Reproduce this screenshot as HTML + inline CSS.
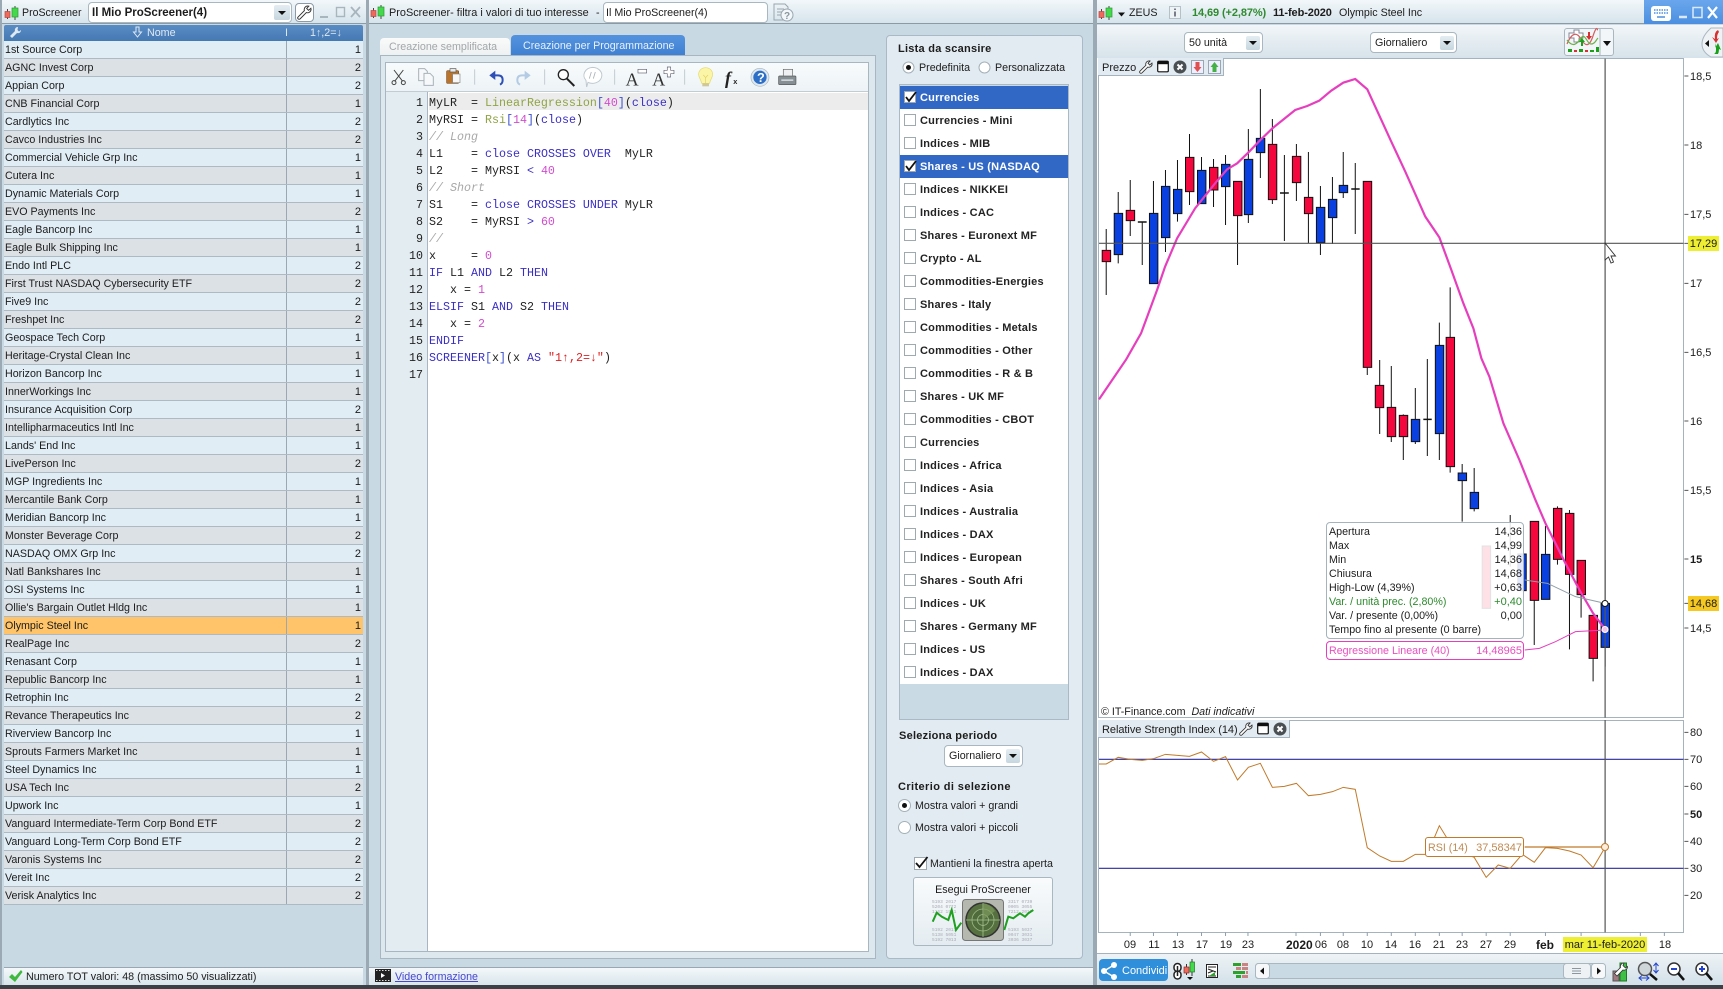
<!DOCTYPE html>
<html lang="it"><head><meta charset="utf-8"><title>ProScreener</title>
<style>
html,body{margin:0;padding:0;width:1723px;height:989px;overflow:hidden;background:#c8d9e3;font-family:"Liberation Sans",sans-serif;font-size:10.7px;color:#1c1c1c}
.b{position:absolute;box-sizing:border-box}
.t{position:absolute;white-space:nowrap;line-height:14px;height:14px;margin-top:1px}
.r{text-align:right}
.bd{font-weight:bold;font-size:11px}
.f11{font-size:11px}
.tb{background:linear-gradient(#f2f7fa,#d6e4ec);border-bottom:1px solid #8b9aa5}
.row{position:absolute;left:4px;width:359px;height:18px;box-sizing:border-box;border-bottom:1px solid #aebac3;line-height:19px;padding-left:1px;white-space:nowrap}
.row i{position:absolute;left:282px;top:0;bottom:0;border-left:1px solid #9aa8b2}
.row b{position:absolute;right:2px;top:0;font-weight:normal;font-size:11px}
.o{background:#e0edf5}.e{background:#dce1e6}
.sel{background:#ffc469}
.it{position:absolute;left:900px;width:168px;height:23px;line-height:24px;padding-left:20px;box-sizing:border-box;font-weight:bold;font-size:11px;color:#222;background:#fff;white-space:nowrap;letter-spacing:.2px}
.it u{position:absolute;left:4px;top:5px;width:12px;height:12px;background:#fff;border:1px solid #9fa9b0;box-sizing:border-box;text-decoration:none}
.it.s{background:#3168c6;color:#fff}
.combo{position:absolute;background:#fff;border:1px solid #a9b7c0;border-radius:4px;box-sizing:border-box;line-height:21px;padding-left:4px;white-space:nowrap}
.combo s{position:absolute;right:2px;top:3px;width:14px;height:14px;background:linear-gradient(#e4edf2,#c6d6df);border-radius:2px;text-decoration:none}
.combo s:after{content:"";position:absolute;left:3px;top:5px;border:4px solid transparent;border-top:4px solid #111;border-bottom:0}
pre{margin:0;position:absolute;font-family:"Liberation Mono",monospace;font-size:11.67px;line-height:17px;color:#222}
.k{color:#3a2fc4}.g{color:#8fa445}.n{color:#d24bd0}.c{color:#a8a8a8;font-style:italic}.q{color:#df2020}.h{color:#3a4fcf}
svg{position:absolute;left:0;top:0}
.v *{vector-effect:non-scaling-stroke}
.ax{font-size:11px}
.d{width:20px;text-align:center;top:937px;font-size:11px}
</style></head><body>

<!-- panels base -->
<div class="b tb" style="left:0;top:0;width:366px;height:24px"></div>
<div class="b tb" style="left:369px;top:0;width:725px;height:24px"></div>
<div class="b tb" style="left:1097px;top:0;width:626px;height:24px"></div>
<div class="b" style="left:1644px;top:0;width:79px;height:24px;background:linear-gradient(#6aa6ec,#4c8fe0)"></div>
<div class="b" style="left:0;top:0;width:2px;height:989px;background:#9aa9b3"></div>
<div class="b" style="left:366px;top:0;width:3px;height:989px;background:#9aa9b3"></div>
<div class="b" style="left:1093px;top:0;width:4px;height:989px;background:#9aa9b3"></div>

<!-- left panel -->
<div class="b" style="left:88px;top:2px;width:204px;height:21px;background:#fff;border:1px solid #a9b7c0;border-radius:4px"></div>
<div class="t bd" style="left:92px;top:5px;font-size:11.5px">Il Mio ProScreener(4)</div>
<div class="b" style="left:274px;top:5px;width:16px;height:15px;background:linear-gradient(#e4edf2,#c6d6df);border-radius:2px"></div>
<div class="b" style="left:295px;top:3px;width:19px;height:19px;background:#fff;border:1px solid #8b9aa5;border-radius:4px"></div>
<div class="t" style="left:22px;top:5px;font-size:10.6px">ProScreener</div>
<div class="b" style="left:4px;top:25px;width:359px;height:16px;background:linear-gradient(#5a8cc4,#4579b3);border-radius:2px 2px 0 0"></div>
<div class="t" style="left:147px;top:25px;color:#dfe9f3">Nome</div>
<div class="t" style="left:285px;top:25px;color:#dfe9f3">I</div>
<div class="t" style="left:310px;top:25px;color:#dfe9f3">1↑,2=↓</div>

<div class="row o" style="top:41px">1st Source Corp<i></i><b>1</b></div>
<div class="row e" style="top:59px">AGNC Invest Corp<i></i><b>2</b></div>
<div class="row o" style="top:77px">Appian Corp<i></i><b>2</b></div>
<div class="row e" style="top:95px">CNB Financial Corp<i></i><b>1</b></div>
<div class="row o" style="top:113px">Cardlytics Inc<i></i><b>2</b></div>
<div class="row e" style="top:131px">Cavco Industries Inc<i></i><b>2</b></div>
<div class="row o" style="top:149px">Commercial Vehicle Grp Inc<i></i><b>1</b></div>
<div class="row e" style="top:167px">Cutera Inc<i></i><b>1</b></div>
<div class="row o" style="top:185px">Dynamic Materials Corp<i></i><b>1</b></div>
<div class="row e" style="top:203px">EVO Payments Inc<i></i><b>2</b></div>
<div class="row o" style="top:221px">Eagle Bancorp Inc<i></i><b>1</b></div>
<div class="row e" style="top:239px">Eagle Bulk Shipping Inc<i></i><b>1</b></div>
<div class="row o" style="top:257px">Endo Intl PLC<i></i><b>2</b></div>
<div class="row e" style="top:275px">First Trust NASDAQ Cybersecurity ETF<i></i><b>2</b></div>
<div class="row o" style="top:293px">Five9 Inc<i></i><b>2</b></div>
<div class="row e" style="top:311px">Freshpet Inc<i></i><b>2</b></div>
<div class="row o" style="top:329px">Geospace Tech Corp<i></i><b>1</b></div>
<div class="row e" style="top:347px">Heritage-Crystal Clean Inc<i></i><b>1</b></div>
<div class="row o" style="top:365px">Horizon Bancorp Inc<i></i><b>1</b></div>
<div class="row e" style="top:383px">InnerWorkings Inc<i></i><b>1</b></div>
<div class="row o" style="top:401px">Insurance Acquisition Corp<i></i><b>2</b></div>
<div class="row e" style="top:419px">Intellipharmaceutics Intl Inc<i></i><b>1</b></div>
<div class="row o" style="top:437px">Lands' End Inc<i></i><b>1</b></div>
<div class="row e" style="top:455px">LivePerson Inc<i></i><b>2</b></div>
<div class="row o" style="top:473px">MGP Ingredients Inc<i></i><b>1</b></div>
<div class="row e" style="top:491px">Mercantile Bank Corp<i></i><b>1</b></div>
<div class="row o" style="top:509px">Meridian Bancorp Inc<i></i><b>1</b></div>
<div class="row e" style="top:527px">Monster Beverage Corp<i></i><b>2</b></div>
<div class="row o" style="top:545px">NASDAQ OMX Grp Inc<i></i><b>2</b></div>
<div class="row e" style="top:563px">Natl Bankshares Inc<i></i><b>1</b></div>
<div class="row o" style="top:581px">OSI Systems Inc<i></i><b>1</b></div>
<div class="row e" style="top:599px">Ollie's Bargain Outlet Hldg Inc<i></i><b>1</b></div>
<div class="row sel" style="top:617px">Olympic Steel Inc<i></i><b>1</b></div>
<div class="row e" style="top:635px">RealPage Inc<i></i><b>2</b></div>
<div class="row o" style="top:653px">Renasant Corp<i></i><b>1</b></div>
<div class="row e" style="top:671px">Republic Bancorp Inc<i></i><b>1</b></div>
<div class="row o" style="top:689px">Retrophin Inc<i></i><b>2</b></div>
<div class="row e" style="top:707px">Revance Therapeutics Inc<i></i><b>2</b></div>
<div class="row o" style="top:725px">Riverview Bancorp Inc<i></i><b>1</b></div>
<div class="row e" style="top:743px">Sprouts Farmers Market Inc<i></i><b>1</b></div>
<div class="row o" style="top:761px">Steel Dynamics Inc<i></i><b>1</b></div>
<div class="row e" style="top:779px">USA Tech Inc<i></i><b>2</b></div>
<div class="row o" style="top:797px">Upwork Inc<i></i><b>1</b></div>
<div class="row e" style="top:815px">Vanguard Intermediate-Term Corp Bond ETF<i></i><b>2</b></div>
<div class="row o" style="top:833px">Vanguard Long-Term Corp Bond ETF<i></i><b>2</b></div>
<div class="row e" style="top:851px">Varonis Systems Inc<i></i><b>2</b></div>
<div class="row o" style="top:869px">Vereit Inc<i></i><b>2</b></div>
<div class="row e" style="top:887px">Verisk Analytics Inc<i></i><b>2</b></div>

<div class="b" style="left:4px;top:967px;width:359px;height:18px;background:linear-gradient(#f4f8fa,#d8e5ec);border-top:1px solid #98a7b1"></div>
<div class="t" style="left:26px;top:969px">Numero TOT valori: 48 (massimo 50 visualizzati)</div>

<!-- middle panel -->
<div class="t" style="left:389px;top:5px;font-size:10.9px">ProScreener- filtra i valori di tuo interesse</div>
<div class="t" style="left:596px;top:5px">-</div>
<div class="b" style="left:603px;top:2px;width:165px;height:21px;background:#fff;border:1px solid #a9b7c0;border-radius:4px"></div>
<div class="t" style="left:606px;top:5px">Il Mio ProScreener(4)</div>

<div class="b" style="left:380px;top:38px;width:130px;height:17px;background:linear-gradient(#fafafa,#eef1f2);border-radius:4px 4px 0 0"></div>
<div class="t" style="left:389px;top:39px;color:#a3a7aa">Creazione semplificata</div>
<div class="b" style="left:511px;top:35px;width:174px;height:20px;background:linear-gradient(#5493de,#3f80d2);border-radius:4px 4px 0 0"></div>
<div class="t" style="left:523px;top:38px;color:#e8f1fb">Creazione per Programmazione</div>

<div class="b" style="left:380px;top:55px;width:496px;height:904px;background:#dde8ee;border:1px solid #a7b6c0"></div>
<div class="b" style="left:385px;top:62px;width:484px;height:890px;background:#fff;border:1px solid #a7b6c0"></div>
<div class="b" style="left:386px;top:63px;width:482px;height:29px;background:linear-gradient(#f8fbfc,#edf3f6);border-bottom:1px solid #c1ccd3"></div>
<div class="b" style="left:386px;top:92px;width:42px;height:859px;background:#e3ecf1;border-right:1px solid #a7b6c0"></div>
<div class="b" style="left:429px;top:93px;width:439px;height:17px;background:#ececec"></div>

<pre class="r" style="left:386px;top:95px;width:37px">1
2
3
4
5
6
7
8
9
10
11
12
13
14
15
16
17</pre>
<pre style="left:429px;top:95px">MyLR  = <span class="g">LinearRegression</span><span class="h">[</span><span class="n">40</span><span class="h">]</span>(<span class="k">close</span>)
MyRSI = <span class="g">Rsi</span><span class="h">[</span><span class="n">14</span><span class="h">]</span>(<span class="k">close</span>)
<span class="c">// Long</span>
L1    = <span class="k">close</span> <span class="k">CROSSES OVER</span>  MyLR
L2    = MyRSI <span class="k">&lt;</span> <span class="n">40</span>
<span class="c">// Short</span>
S1    = <span class="k">close</span> <span class="k">CROSSES UNDER</span> MyLR
S2    = MyRSI <span class="k">&gt;</span> <span class="n">60</span>
<span class="c">//</span>
x     = <span class="n">0</span>
<span class="k">IF</span> L1 <span class="k">AND</span> L2 <span class="k">THEN</span>
   x = <span class="n">1</span>
<span class="k">ELSIF</span> S1 <span class="k">AND</span> S2 <span class="k">THEN</span>
   x = <span class="n">2</span>
<span class="k">ENDIF</span>
<span class="k">SCREENER</span><span class="h">[</span>x<span class="h">]</span>(x <span class="k">AS</span> <span class="q">"1↑,2=↓"</span>)
</pre>

<div class="b" style="left:369px;top:967px;width:724px;height:18px;background:linear-gradient(#f4f8fa,#d8e5ec);border-top:1px solid #98a7b1"></div>
<div class="t" style="left:395px;top:969px;color:#4646d2;text-decoration:underline">Video formazione</div>

<!-- options panel -->
<div class="b" style="left:886px;top:35px;width:197px;height:924px;background:#e2ebf1;border:1px solid #a9bac6;border-radius:4px"></div>
<div class="t bd" style="left:898px;top:41px;letter-spacing:.25px">Lista da scansire</div>
<div class="t" style="left:919px;top:60px">Predefinita</div>
<div class="t" style="left:995px;top:60px">Personalizzata</div>
<div class="b" style="left:899px;top:84px;width:170px;height:636px;background:#c9dae4;border:1px solid #a9bac6"></div>
<div class="it s" style="top:86px"><u></u>Currencies</div>
<div class="it" style="top:109px"><u></u>Currencies - Mini</div>
<div class="it" style="top:132px"><u></u>Indices - MIB</div>
<div class="it s" style="top:155px"><u></u>Shares - US (NASDAQ</div>
<div class="it" style="top:178px"><u></u>Indices - NIKKEI</div>
<div class="it" style="top:201px"><u></u>Indices - CAC</div>
<div class="it" style="top:224px"><u></u>Shares - Euronext MF</div>
<div class="it" style="top:247px"><u></u>Crypto - AL</div>
<div class="it" style="top:270px"><u></u>Commodities-Energies</div>
<div class="it" style="top:293px"><u></u>Shares - Italy</div>
<div class="it" style="top:316px"><u></u>Commodities - Metals</div>
<div class="it" style="top:339px"><u></u>Commodities - Other</div>
<div class="it" style="top:362px"><u></u>Commodities - R &amp; B</div>
<div class="it" style="top:385px"><u></u>Shares - UK MF</div>
<div class="it" style="top:408px"><u></u>Commodities - CBOT</div>
<div class="it" style="top:431px"><u></u>Currencies</div>
<div class="it" style="top:454px"><u></u>Indices - Africa</div>
<div class="it" style="top:477px"><u></u>Indices - Asia</div>
<div class="it" style="top:500px"><u></u>Indices - Australia</div>
<div class="it" style="top:523px"><u></u>Indices - DAX</div>
<div class="it" style="top:546px"><u></u>Indices - European</div>
<div class="it" style="top:569px"><u></u>Shares - South Afri</div>
<div class="it" style="top:592px"><u></u>Indices - UK</div>
<div class="it" style="top:615px"><u></u>Shares - Germany MF</div>
<div class="it" style="top:638px"><u></u>Indices - US</div>
<div class="it" style="top:661px"><u></u>Indices - DAX</div>

<div class="t bd" style="left:899px;top:728px;letter-spacing:.25px">Seleziona periodo</div>
<div class="combo" style="left:944px;top:745px;width:79px;height:22px">Giornaliero<s></s></div>
<div class="t bd" style="left:898px;top:779px;letter-spacing:.4px">Criterio di selezione</div>
<div class="t" style="left:915px;top:798px">Mostra valori + grandi</div>
<div class="t" style="left:915px;top:820px">Mostra valori + piccoli</div>
<div class="t" style="left:930px;top:856px">Mantieni la finestra aperta</div>
<div class="b" style="left:913px;top:877px;width:140px;height:69px;background:linear-gradient(#f9fbfc,#e4ecf1);border:1px solid #a9b7c0;border-radius:3px"></div>
<div class="t" style="left:913px;top:882px;width:140px;text-align:center">Esegui ProScreener</div>

<!-- chart panel -->
<div class="b" style="left:1097px;top:25px;width:626px;height:33px;background:linear-gradient(#f2f6f9,#d7e3ea)"></div>
<div class="b" style="left:1097px;top:58px;width:626px;height:895px;background:#fff"></div>
<div class="b" style="left:1098px;top:58px;width:586px;height:660px;border:1px solid #a4b3bd"></div>
<div class="b" style="left:1098px;top:720px;width:586px;height:213px;border:1px solid #a4b3bd"></div>
<div class="b" style="left:1097px;top:953px;width:626px;height:33px;background:linear-gradient(#eef3f6,#d2e0e8);border-top:1px solid #a4b3bd"></div>
<div class="b" style="left:0;top:985px;width:1723px;height:4px;background:#3a4046"></div>

<div class="t" style="left:1129px;top:5px">ZEUS</div>
<div class="t bd" style="left:1192px;top:5px;color:#2f8a2f;letter-spacing:-.1px">14,69 (+2,87%)</div>
<div class="t bd" style="left:1273px;top:5px;letter-spacing:-.1px">11-feb-2020</div>
<div class="t" style="left:1339px;top:5px">Olympic Steel Inc</div>
<div class="combo" style="left:1184px;top:32px;width:79px;height:21px">50 unità<s></s></div>
<div class="combo" style="left:1370px;top:32px;width:87px;height:21px">Giornaliero<s></s></div>
<div class="b" style="left:1564px;top:28px;width:50px;height:28px;background:#f2f6f8;border:1px solid #a9b7c0;border-radius:3px"></div>
<div class="b" style="left:1098px;top:58px;width:126px;height:18px;background:#e2ebf1;border:1px solid #a4b3bd;border-width:0 1px 1px 0"></div>
<div class="t f11" style="left:1102px;top:60px">Prezzo</div>
<div class="b" style="left:1098px;top:720px;width:192px;height:18px;background:#e2ebf1;border:1px solid #a4b3bd;border-width:0 1px 1px 0"></div>
<div class="t f11" style="left:1102px;top:722px;letter-spacing:-.05px">Relative Strength Index (14)</div>

<!-- master SVG -->
<svg width="1723" height="989" viewBox="0 0 1723 989">
<defs>
<symbol id="logo" viewBox="0 0 16 14"><path d="M3.5 3V13M11 0V14" stroke="#444" stroke-width="1" fill="none"/><rect x="1" y="5.5" width="5" height="6" fill="#ef6a5a" stroke="#b04a4a" stroke-width=".7"/><rect x="8" y="2" width="6" height="9" fill="#45d84c" stroke="#2a9a30" stroke-width=".7"/></symbol>
<symbol id="wr" viewBox="0 0 16 16"><path d="M11.5 1a3.8 3.8 0 0 0-3.6 5L1.2 12.7a1.4 1.4 0 0 0 2.1 2.1L10 8.100a3.800 3.800 0 0 0 5-3.600l-.2-1-2.500 2.200-2-2L12.600 1.200z" fill="#fff" stroke="#333" stroke-width="1"/></symbol>
<symbol id="win" viewBox="0 0 12 12"><rect x=".7" y=".7" width="10.600" height="10.600" rx="1" fill="#fff" stroke="#111" stroke-width="1.200"/><rect x=".7" y=".7" width="10.600" height="3" fill="#111"/></symbol>
<symbol id="xc" viewBox="0 0 14 14"><circle cx="7" cy="7" r="6.500" fill="#4a4f54"/><path d="M4.500 4.500l5 5M9.500 4.500l-5 5" stroke="#fff" stroke-width="2"/></symbol>
</defs>

<use href="#logo" x="4" y="6" width="16" height="14"/>
<use href="#logo" x="370" y="5" width="16" height="14"/>
<use href="#logo" x="1098" y="6" width="16" height="14"/>
<use href="#wr" x="297" y="5" width="15" height="15"/>
<path d="M278 11h8l-4 4z" fill="#111"/>
<!-- left window buttons -->
<path d="M320 17h8" stroke="#a8b5bd" stroke-width="2"/><rect x="336.500" y="7.500" width="8" height="9" fill="none" stroke="#a8b5bd" stroke-width="1.400"/><path d="M351 7l9 10M360 7l-9 10" stroke="#a8b5bd" stroke-width="1.800"/>
<!-- header wrench & arrow -->
<path d="M18 27a3 3 0 0 0-3 4l-5 5 2 2 5-5a3 3 0 0 0 4-3l-2 1.500-1.500-1.500z" fill="#dfe9f3"/>
<path d="M136 27h3v5h2.500l-4 5-4-5H136z" fill="none" stroke="#dfe9f3" stroke-width="1"/>
<!-- status check -->
<path d="M9 977l3-3 3 3 6-7 1.500 2-7.500 10z" fill="#3fb83f"/>
<!-- mid title help -->
<g fill="none" stroke="#9aa6ad" stroke-width="1"><path d="M774 4h11l3 3v13h-14zM777 9h7M777 12h5M777 15h5"/></g><circle cx="787" cy="15" r="6" fill="#f2f7fa" stroke="#9aa6ad"/><text x="784" y="19" font-family="Liberation Sans" font-size="10" font-weight="bold" fill="#8a969d">?</text>
<!-- film icon -->
<rect x="375" y="969" width="16" height="13" fill="#222"/><path d="M376 970.500h14M376 980.500h14" stroke="#ddd" stroke-width="1" stroke-dasharray="1.500 1.500"/><path d="M381 973v5l4-2.500z" fill="#fff"/>

<!-- editor toolbar icons -->
<g transform="translate(370,0) scale(.3333)">
 <g fill="none" stroke="#444" stroke-width="3"><path d="M72 210l26 34M100 210l-26 34"/><circle cx="72" cy="248" r="6"/><circle cx="100" cy="248" r="6"/></g>
 <g fill="#f6f8fa" stroke="#a8b2b8" stroke-width="3"><path d="M146 206h18l8 8v28h-26z"/><path d="M162 220h18l10 10v26h-28z"/></g>
 <rect x="230" y="212" width="36" height="38" rx="3" fill="#b9732a" stroke="#7a4a1a" stroke-width="2"/><rect x="240" y="206" width="18" height="10" fill="#e8e8e8" stroke="#555" stroke-width="2"/><rect x="248" y="222" width="22" height="26" fill="#f7f7f7" stroke="#888" stroke-width="2"/>
 <path d="M314 208v46M524 208v46M734 208v46M944 208v46" stroke="#c2ccd2" stroke-width="3"/>
 <path d="M362 226h22q14 0 14 14 0 10-8 14" fill="none" stroke="#2c50b8" stroke-width="6"/><path d="M376 212l-18 14 18 14z" fill="#2c50b8"/>
 <path d="M478 226h-22q-14 0-14 14 0 10 8 14" fill="none" stroke="#b4cbe6" stroke-width="6"/><path d="M464 212l18 14-18 14z" fill="#b4cbe6"/>
 <circle cx="580" cy="224" r="15" fill="#fff" stroke="#222" stroke-width="4"/><path d="M591 236l22 22" stroke="#222" stroke-width="6"/>
 <path d="M668 202a28 24 0 1 1-14 45l-4 14-2-20a28 24 0 0 1 20-39z" fill="#fff" stroke="#bfc9cf" stroke-width="3"/><path d="M664 216l-6 20M676 216l-6 20" stroke="#a8b2b8" stroke-width="2.500"/>
 <text x="767" y="256" font-family="Liberation Serif" font-size="54" fill="#333">A</text><rect x="804" y="208" width="26" height="11" fill="#fff" stroke="#667" stroke-width="2"/>
 <text x="847" y="256" font-family="Liberation Serif" font-size="54" fill="#333">A</text><path d="M892 201h10v10h10v10h-10v10h-10v-10h-10v-10h10z" fill="#fff" stroke="#667" stroke-width="2"/>
 <path d="M1007 203c12 0 21 9 21 20 0 10-7 14-9 27h-24c-2-13-9-17-9-27 0-11 9-20 21-20z" fill="#fbf5a8" stroke="#e6d96a" stroke-width="2"/><path d="M1000 225l7 8 7-8M1007 233v16" fill="none" stroke="#e0cf60" stroke-width="2"/><rect x="997" y="250" width="20" height="9" fill="#cfc79a"/>
 <text x="1065" y="252" font-family="Liberation Serif" font-style="italic" font-weight="bold" font-size="54" fill="#222">f</text><text x="1090" y="252" font-family="Liberation Sans" font-weight="bold" font-size="22" fill="#222">x</text>
 <circle cx="1170" cy="232" r="27" fill="#dfe8ee" stroke="#a9b7c0" stroke-width="2"/><circle cx="1170" cy="232" r="20" fill="#2d6fc7"/><text x="1161" y="246" font-family="Liberation Sans" font-weight="bold" font-size="38" fill="#fff">?</text>
 <rect x="1226" y="228" width="52" height="26" rx="3" fill="#868f94" stroke="#555" stroke-width="2"/><rect x="1240" y="208" width="28" height="20" fill="#eef0f1" stroke="#666" stroke-width="2"/><rect x="1234" y="238" width="36" height="5" fill="#cfd5d8"/>
</g>

<!-- options radios & checks -->
<g fill="#fff" stroke="#a4b0b8" stroke-width="1"><circle cx="908.500" cy="67.500" r="5.500"/><circle cx="984.500" cy="67.500" r="5.500"/><circle cx="904.500" cy="805.500" r="6"/><circle cx="904.500" cy="827.500" r="6"/></g>
<circle cx="908.500" cy="67.500" r="2.500" fill="#111"/><circle cx="904.500" cy="805.500" r="2.500" fill="#111"/>
<rect x="904.500" y="91.500" width="11" height="11" fill="#fff" stroke="#9fa9b0"/>
<rect x="904.500" y="160.500" width="11" height="11" fill="#fff" stroke="#9fa9b0"/>
<path d="M906 97l3 4 7-9M906 166l3 4 7-9" fill="none" stroke="#111" stroke-width="1.800"/>
<rect x="914.500" y="857.500" width="12" height="12" fill="#fff" stroke="#9fa9b0"/>
<path d="M916 863l3.500 4 8-10" fill="none" stroke="#111" stroke-width="1.800"/>

<!-- radar button -->
<g font-family="Liberation Mono" font-size="4.500" fill="#a9a9b5">
 <text x="932" y="903">5193 2017</text><text x="932" y="908">5204 0772</text><text x="932" y="913">1162 1931</text><text x="932" y="931">5192 2017</text><text x="932" y="936">5138 5051</text><text x="932" y="941">5192 7013</text>
 <text x="1008" y="903">3317 0739</text><text x="1008" y="908">0005 3055</text><text x="1008" y="913">7212 2017</text><text x="1008" y="931">5193 5037</text><text x="1008" y="936">0047 3031</text><text x="1008" y="941">3036 3037</text>
</g>
<rect x="962.500" y="899.500" width="41" height="41" rx="3" fill="#b5b8ae" stroke="#777"/>
<circle cx="983" cy="920" r="17" fill="#56703f" stroke="#333" stroke-width="1.500"/>
<circle cx="983" cy="920" r="11" fill="#4f6b3c" stroke="#9db884" stroke-width=".8"/><circle cx="983" cy="920" r="5.500" fill="none" stroke="#9db884" stroke-width=".8"/>
<path d="M983 903v34M966 920h34" stroke="#a8c38e" stroke-width=".8"/>
<path d="M983 920l12-9a17 17 0 0 0-12-8z" fill="#7d9a5e" opacity=".7"/>
<path d="M932.700 921.700l4-9 5 4 3.300 1.700 3.300 1.600 3.400-10 4.300 20 5.300-7.300" fill="none" stroke="#1fa01f" stroke-width="2"/>
<path d="M1004.300 930l4-13.300 5 1.600 6.700-5 5 3.400 3.300-3.400 5-3.300" fill="none" stroke="#1fa01f" stroke-width="2"/>

<!-- chart title -->
<path d="M1118 12.500h7l-3.500 4z" fill="#111"/>
<rect x="1169.500" y="6.500" width="11" height="12" fill="#eef3f6" stroke="#b5c0c7"/><path d="M1175 8.500v1.500M1175 11.500v5" stroke="#556" stroke-width="1.500"/>
<!-- top right window -->
<rect x="1651" y="6" width="20" height="15" rx="3" fill="#fff"/><path d="M1654 10h14M1654 13h14" stroke="#4c8fe0" stroke-width="1.500" stroke-dasharray="1.500 1"/><path d="M1657 17h8" stroke="#4c8fe0" stroke-width="1.500"/>
<path d="M1679 17h8" stroke="#dbe9fa" stroke-width="2.500"/><rect x="1693" y="7.500" width="9" height="10" fill="none" stroke="#dbe9fa" stroke-width="1.500"/><path d="M1708 7l9 11M1717 7l-9 11" stroke="#fff" stroke-width="2.200"/>
<!-- indicator button -->
<path d="M1600 28.500v27" stroke="#a9b7c0"/>
<path d="M1603 41h8l-4 5z" fill="#111"/>
<path d="M1569 33h5v-3h5v3h4v5h-4v4h-5v-4h-5z" fill="#fff" stroke="#889"/>
<path d="M1567 44c5-12 10-12 14-5s8 9 12-3 4-6 5-6" fill="none" stroke="#d26060" stroke-width="1.200"/>
<path d="M1567 40c6 8 10 4 14-2s6 6 10 6 5-4 7-6" fill="none" stroke="#6ab24a" stroke-width="1.200"/>
<path d="M1582 38l3 4h-2v4h-2v-4h-2z" fill="#1aa01a"/><path d="M1588 32h2v4h2l-3 4-3-4h2z" fill="#d83030"/>
<path d="M1568 49h4v3h-4zM1579 49h4v3h-4zM1590 50h4v2h-4zM1596 47h3v5h-3z" fill="#1aa01a"/><path d="M1574 50h3v2h-3zM1585 50h3v2h-3z" fill="#d83030"/>
<!-- far right tab -->
<path d="M1723 28h-12q-9 8-9 16t9 13h12z" fill="#eef2f5" stroke="#a9b7c0"/>
<path d="M1709 40v7l-4-3.500z" fill="#111"/>
<path d="M1718 30q-4 2-3 9l-3-2 4 6 3-5-2 1q0-5 2-7z" fill="#d83030"/><path d="M1716 43v7q0 3-2 4h4q1-2 1-5l2 1-3-7-3 5z" fill="#1aa01a"/>
<!-- prezzo icons -->
<use href="#wr" x="1139" y="60" width="14" height="14"/>
<use href="#win" x="1157" y="60" width="12" height="13"/>
<use href="#xc" x="1173" y="60" width="14" height="14"/>
<rect x="1191.500" y="60.500" width="12" height="13" fill="#eef" stroke="#98a7b1"/><path d="M1195.500 62h4v5h2l-4 5-4-5h2z" fill="#e05050"/>
<rect x="1208.500" y="60.500" width="12" height="13" fill="#eef" stroke="#98a7b1"/><path d="M1214.500 62l4 5h-2v5h-4v-5h-2z" fill="#45b045"/>
<!-- rsi icons -->
<use href="#wr" x="1239" y="722" width="14" height="14"/>
<use href="#win" x="1257" y="722" width="12" height="13"/>
<use href="#xc" x="1273" y="722" width="14" height="14"/>

<!-- price chart -->
<g class="v" transform="translate(1095,0) scale(.4004,.33333)">
 <path fill="none" stroke="#111" stroke-width="1" d="M28 687V885M58 576V790M88 540V708M118 665V795M146 543V851M176 510V756M206 480V665M236 402V615M266 471V611M296 477V621M326 465V675M356 543V795M383 387V669M413 267V534M443 357V612M473 465V723M503 432V603M533 456V730M563 558V765M593 531V732M620 456V594M650 489V702M680 1102V1125M711 1080V1302M740 1098V1326M770 1243V1380M800 1164V1332M830 1077V1368M860 968V1380M887 862V1418M917 1392V1565M947 1404V1534M1037 1545V1700M1097 1578V1935M1125 1578V1700M1155 1519V1694M1185 1530V1948M1214 1681V1853M1244 1846V2044M1274 1680V2000"/>
 <path fill="none" stroke="#111" stroke-width="1.500" d="M107 666H129M462 579H484M640 567H661M820 1258H841"/>
 <g fill="#f4073d" stroke="#111" stroke-width="1">
  <rect x="18" y="751" width="21" height="34"/><rect x="78" y="631" width="21" height="31"/><rect x="226" y="472" width="21" height="103"/><rect x="286" y="502" width="21" height="68"/><rect x="346" y="544" width="21" height="103"/><rect x="433" y="433" width="21" height="166"/><rect x="493" y="469" width="21" height="79"/><rect x="523" y="592" width="21" height="49"/><rect x="670" y="544" width="21" height="558"/><rect x="700" y="1156" width="21" height="67"/><rect x="730" y="1222" width="21" height="88"/><rect x="760" y="1246" width="21" height="64"/><rect x="877" y="1012" width="21" height="388"/><rect x="967" y="1638" width="21" height="187"/><rect x="1087" y="1564" width="21" height="237"/><rect x="1145" y="1525" width="21" height="153"/><rect x="1175" y="1540" width="21" height="183"/><rect x="1204" y="1681" width="21" height="103"/><rect x="1234" y="1846" width="21" height="129"/>
 </g>
 <g fill="#0a3fe0" stroke="#111" stroke-width="1">
  <rect x="48" y="640" width="21" height="124"/><rect x="136" y="640" width="21" height="211"/><rect x="166" y="559" width="21" height="154"/><rect x="196" y="568" width="21" height="73"/><rect x="256" y="511" width="21" height="100"/><rect x="316" y="493" width="21" height="67"/><rect x="373" y="478" width="21" height="166"/><rect x="403" y="415" width="21" height="43"/><rect x="553" y="622" width="21" height="106"/><rect x="583" y="598" width="21" height="55"/><rect x="610" y="556" width="21" height="22"/><rect x="790" y="1258" width="21" height="67"/><rect x="850" y="1036" width="21" height="265"/><rect x="907" y="1419" width="21" height="23"/><rect x="937" y="1477" width="21" height="49"/><rect x="1056" y="1662" width="21" height="110"/><rect x="1115" y="1663" width="21" height="135"/><rect x="1264" y="1810" width="21" height="132"/>
 </g>
 <path fill="none" stroke="#e63fbe" stroke-width="2.200" d="M10 1198L78 1078 115 1000 155 870 175 800 205 715 250 625 300 550 330 508 355 490 385 455 413 420 443 385 500 330 530 318 560 302 590 272 620 248 650 237 680 268 740 425 775 515 825 650 860 712 890 810 920 910 945 985 965 1075 985 1130 1020 1270 1060 1380 1100 1500 1125 1570 1175 1690 1210 1770 1244 1840 1274 1888"/>
 <path fill="none" stroke="#555" stroke-width="1.200" d="M1274 176V2153M10 730H1470"/>
 <path fill="none" stroke="#8f9ea8" stroke-width="1" d="M1073 1740L1130 1750 1200 1790 1274 1810"/>
 <path fill="none" stroke="#e63fbe" stroke-width="1" d="M1073 1950L1110 1945 1150 1925 1200 1895 1274 1890"/>
 <path fill="none" stroke="#555" stroke-width="1" d="M1472 228H1482M1472 435H1482M1472 643H1482M1472 850H1482M1472 1057H1482M1472 1263H1482M1472 1471H1482M1472 1677H1482M1472 1810H1482M1472 1884H1482M1472 730H1482"/>
</g>
<circle cx="1605" cy="603.500" r="3" fill="#fff" stroke="#111"/>
<circle cx="1605" cy="629.500" r="3" fill="#f7c5ea" stroke="#fff"/>
<!-- cursor -->
<path d="M1605 243v17l3.500-3 2.500 6 2.500-1-2.500-6h4.500z" fill="#fff" stroke="#333" stroke-width=".9"/>

<!-- rsi chart -->
<g class="v" transform="translate(1095,700) scale(.4004,.33333)">
 <path fill="none" stroke="#2a2a9c" stroke-width="1.200" d="M10 178H1470M10 505H1470"/>
 <path fill="none" stroke="#c07a2a" stroke-width="1" d="M10 192L28 192 58 172 88 178 118 181 146 176 176 163 206 166 236 169 266 156 296 184 326 170 356 240 383 202 413 190 443 262 473 259 503 250 533 287 563 283 593 275 620 262 650 268 680 443 711 468 740 484 770 484 800 463 830 463 860 377 887 430 917 460 947 472 977 532 1007 495 1037 505 1067 463 1097 487 1125 443 1155 445 1185 453 1214 465 1244 503 1274 442"/>
 <path fill="none" stroke="#c07a2a" stroke-width="1.200" d="M1073 441H1274"/>
 <path fill="none" stroke="#555" stroke-width="1.200" d="M1274 60V697"/>
 <path fill="none" stroke="#555" stroke-width="1" d="M1472 97H1482M1472 178H1482M1472 259H1482M1472 342H1482M1472 424H1482M1472 505H1482M1472 586H1482"/>
 <path fill="none" stroke="#8f9ea8" stroke-width="1" d="M88 697V708M146 697V708M206 697V708M266 697V708M326 697V708M382 697V708M502 697V708M563 697V708M620 697V708M680 697V708M740 697V708M800 697V708M860 697V708M917 697V708M977 697V708M1037 697V708M1125 697V708M1214 697V708M1362 697V708M1422 697V708"/>
</g>
<circle cx="1605" cy="847" r="3.500" fill="#fbeedd" stroke="#c07a2a"/>

<!-- bottom toolbar icons -->
<rect x="1099" y="959" width="69" height="22" rx="4" fill="#2f8fdb"/>
<g fill="#fff"><circle cx="1104" cy="971" r="3"/><circle cx="1114" cy="965" r="3"/><circle cx="1114" cy="977" r="3"/></g><path d="M1104 971L1114 965M1104 971L1114 977" stroke="#fff" stroke-width="1.500"/>
<g fill="#fff" stroke="#222" stroke-width="1.500"><rect x="1174" y="963.500" width="7" height="8" rx="3.500"/><rect x="1174" y="971" width="7" height="8" rx="3.500"/></g><path d="M1177.500 966v10" stroke="#222" stroke-width="1.500"/>
<path d="M1186.500 964v11M1192 959v17" stroke="#333"/><rect x="1184" y="967" width="5" height="6" fill="#ef6a5a" stroke="#8a2a2a" stroke-width=".7"/><rect x="1190" y="962" width="4.500" height="10" fill="#45d84c" stroke="#1d7a22" stroke-width=".7"/><path d="M1187 977h6l-3 3z" fill="#111"/>
<rect x="1206.500" y="964.500" width="11" height="13" fill="#fff" stroke="#222"/><path d="M1208 967h8M1208 969l8 3M1208 973l5-2M1208 976h8" stroke="#222"/><path d="M1209 976l6-4v4z" fill="#2da02d"/>
<g><rect x="1233" y="963" width="8" height="3" fill="#2da02d"/><rect x="1242" y="963" width="6" height="3" fill="#c98383"/><rect x="1236" y="967" width="5" height="3" fill="#c98383"/><rect x="1242" y="967" width="6" height="3" fill="#c98383"/><rect x="1233" y="971" width="12" height="3" fill="#2da02d"/><rect x="1246" y="971" width="2" height="3" fill="#c98383"/><rect x="1236" y="975" width="5" height="3" fill="#2da02d"/><rect x="1242" y="975" width="6" height="3" fill="#c98383"/></g>
<rect x="1255.500" y="963.500" width="349" height="15" rx="3" fill="#c9dae4" stroke="#a9b7c0"/>
<rect x="1255.500" y="963.500" width="14" height="15" rx="3" fill="#f6f8fa" stroke="#a9b7c0"/><path d="M1264 967.500v7l-4-3.500z" fill="#111"/>
<rect x="1563.500" y="963.500" width="27" height="15" rx="3" fill="#eef2f5" stroke="#a9b7c0"/><path d="M1572 968.500h9M1572 971h9M1572 973.500h9" stroke="#8a97a0"/>
<rect x="1591.500" y="963.500" width="14" height="15" rx="3" fill="#f6f8fa" stroke="#a9b7c0"/><path d="M1597 967.500v7l4-3.500z" fill="#111"/>
<rect x="1613" y="971" width="6" height="10" fill="#a07a80" stroke="#555"/><rect x="1620" y="963" width="6.500" height="18" fill="#3fbf45" stroke="#1d7a22"/>
<path d="M1624 963a3.500 3.500 0 0 0-3.500 4.500l-6 6 2.500 2.500 6-6a3.500 3.500 0 0 0 4.500-3.500l-2 1.500-2.500-2.500z" fill="#fff" stroke="#333" stroke-width=".8"/>
<circle cx="1645" cy="969" r="6.500" fill="#cfd6da" stroke="#555" stroke-width="1.500"/><path d="M1650 974l7 6" stroke="#111" stroke-width="2.500"/>
<path d="M1656 963v10M1653.500 966l2.500-3 2.500 3M1653.500 970l2.500 3 2.500-3M1639 978h10M1642 975.500l-3 2.500 3 2.500M1646 975.500l3 2.500-3 2.500" fill="none" stroke="#2244cc" stroke-width="1"/>
<circle cx="1674" cy="969" r="6" fill="#fff" stroke="#333" stroke-width="1.500"/><path d="M1671 969h6" stroke="#2244cc" stroke-width="2"/><path d="M1678 973l6 7" stroke="#111" stroke-width="2.500"/>
<circle cx="1702" cy="969" r="6" fill="#fff" stroke="#333" stroke-width="1.500"/><path d="M1699 969h6M1702 966v6" stroke="#2244cc" stroke-width="2"/><path d="M1706 973l6 7" stroke="#111" stroke-width="2.500"/>
</svg>

<!-- tooltip -->
<div class="b" style="left:1326px;top:522px;width:198px;height:117px;background:rgba(255,255,255,.88);border:1px solid #a4b3bd;border-radius:4px"></div>
<div class="b" style="left:1326px;top:641px;width:198px;height:19px;background:rgba(255,255,255,.9);border:1px solid #e63fbe;border-radius:4px"></div>
<div class="t" style="left:1329px;top:524px">Apertura</div><div class="t r f11" style="left:1452px;top:524px;width:70px">14,36</div>
<div class="t" style="left:1329px;top:538px">Max</div><div class="t r f11" style="left:1452px;top:538px;width:70px">14,99</div>
<div class="t" style="left:1329px;top:552px">Min</div><div class="t r f11" style="left:1452px;top:552px;width:70px">14,36</div>
<div class="t" style="left:1329px;top:566px">Chiusura</div><div class="t r f11" style="left:1452px;top:566px;width:70px">14,68</div>
<div class="t" style="left:1329px;top:580px">High-Low (4,39%)</div><div class="t r f11" style="left:1452px;top:580px;width:70px">+0,63</div>
<div class="t" style="left:1329px;top:594px;color:#2c8a2c">Var. / unità prec. (2,80%)</div><div class="t r f11" style="left:1452px;top:594px;width:70px;color:#2c8a2c">+0,40</div>
<div class="t" style="left:1329px;top:608px">Var. / presente (0,00%)</div><div class="t r f11" style="left:1452px;top:608px;width:70px">0,00</div>
<div class="t" style="left:1329px;top:622px">Tempo fino al presente (0 barre)</div>
<div class="t" style="left:1329px;top:643px;color:#e84fc0">Regressione Lineare (40)</div><div class="t r f11" style="left:1452px;top:643px;width:70px;color:#e84fc0">14,48965</div>

<div class="t" style="left:1101px;top:704px">© IT-Finance.com &nbsp;<i>Dati indicativi</i></div>

<!-- rsi label -->
<div class="b" style="left:1425px;top:837px;width:99px;height:20px;background:#fff;border:1px solid #c07a2a;border-radius:3px"></div>
<div class="t" style="left:1428px;top:840px;color:#c08a52">RSI (14)</div>
<div class="t r f11" style="left:1460px;top:840px;width:62px;color:#c08a52">37,58347</div>

<!-- price axis -->
<div class="t ax" style="left:1690px;top:69px">18,5</div>
<div class="t ax" style="left:1690px;top:138px">18</div>
<div class="t ax" style="left:1690px;top:207px">17,5</div>
<div class="t ax" style="left:1690px;top:276px">17</div>
<div class="t ax" style="left:1690px;top:345px">16,5</div>
<div class="t ax" style="left:1690px;top:414px">16</div>
<div class="t ax" style="left:1690px;top:483px">15,5</div>
<div class="t ax bd" style="left:1690px;top:552px">15</div>
<div class="t ax" style="left:1690px;top:621px">14,5</div>
<div class="t f11" style="left:1688px;top:235px;width:31px;height:15px;line-height:16px;background:#eeee33;text-align:center">17,29</div>
<div class="t f11" style="left:1688px;top:595px;width:31px;height:15px;line-height:16px;background:#f5c822;text-align:center">14,68</div>
<!-- rsi axis -->
<div class="t ax" style="left:1690px;top:725px">80</div>
<div class="t ax" style="left:1690px;top:752px">70</div>
<div class="t ax" style="left:1690px;top:779px">60</div>
<div class="t ax bd" style="left:1690px;top:807px">50</div>
<div class="t ax" style="left:1690px;top:834px">40</div>
<div class="t ax" style="left:1690px;top:861px">30</div>
<div class="t ax" style="left:1690px;top:888px">20</div>
<!-- date axis -->
<div class="t d" style="left:1120px">09</div>
<div class="t d" style="left:1144px">11</div>
<div class="t d" style="left:1168px">13</div>
<div class="t d" style="left:1192px">17</div>
<div class="t d" style="left:1216px">19</div>
<div class="t d" style="left:1238px">23</div>
<div class="t d bd" style="left:1286px;font-size:12px">2020</div>
<div class="t d" style="left:1311px">06</div>
<div class="t d" style="left:1333px">08</div>
<div class="t d" style="left:1357px">10</div>
<div class="t d" style="left:1381px">14</div>
<div class="t d" style="left:1405px">16</div>
<div class="t d" style="left:1429px">21</div>
<div class="t d" style="left:1452px">23</div>
<div class="t d" style="left:1476px">27</div>
<div class="t d" style="left:1500px">29</div>
<div class="t d bd" style="left:1535px;font-size:12px">feb</div>
<div class="t f11" style="left:1563px;top:936px;width:84px;height:15px;line-height:16px;background:#eeee33;text-align:center">mar 11-feb-2020</div>
<div class="t d" style="left:1655px">18</div>
<div class="t f11" style="left:1122px;top:963px;color:#fff">Condividi</div>

</body></html>
